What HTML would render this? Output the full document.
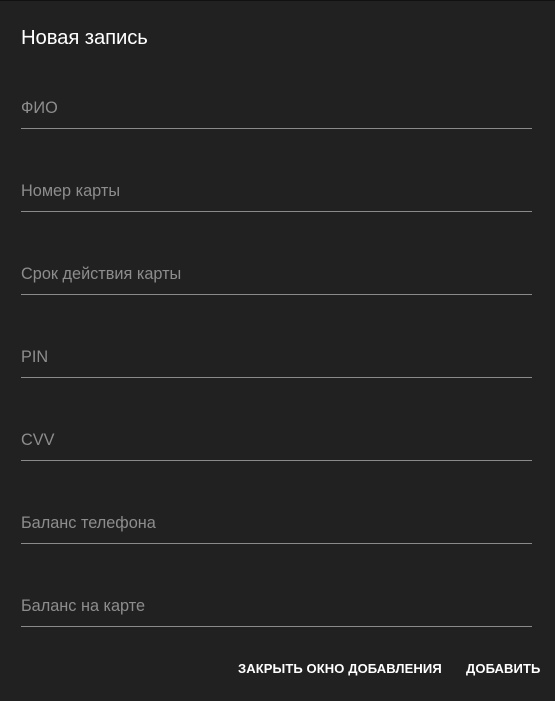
<!DOCTYPE html>
<html><head><meta charset="utf-8"><style>
html,body{margin:0;padding:0;width:555px;height:701px;overflow:hidden;background:#212121;font-family:"Liberation Sans",sans-serif;}
.top{position:absolute;left:0;top:0;width:555px;height:1px;background:#111;}
.title{position:absolute;left:21px;top:27px;font-size:20.3px;color:#fff;letter-spacing:-0.1px;}
.f{position:absolute;left:21px;width:511px;height:1px;background:#8a8a8a;}
.l{position:absolute;left:21px;font-size:16.3px;color:#8d8d8d;}
.b{position:absolute;top:661px;font-size:13px;color:#fff;font-weight:bold;letter-spacing:0.1px;}
</style></head><body>
<div class="top"></div>
<div class="title">Новая запись</div>
<div class="l" style="top:99px">ФИО</div><div class="f" style="top:128px"></div>
<div class="l" style="top:182px">Номер карты</div><div class="f" style="top:211px"></div>
<div class="l" style="top:265px">Срок действия карты</div><div class="f" style="top:294px"></div>
<div class="l" style="top:348px">PIN</div><div class="f" style="top:377px"></div>
<div class="l" style="top:431px">CVV</div><div class="f" style="top:460px"></div>
<div class="l" style="top:514px">Баланс телефона</div><div class="f" style="top:543px"></div>
<div class="l" style="top:597px">Баланс на карте</div><div class="f" style="top:626px"></div>
<div class="b" style="left:238px">ЗАКРЫТЬ ОКНО ДОБАВЛЕНИЯ</div>
<div class="b" style="left:466px">ДОБАВИТЬ</div>
</body></html>
